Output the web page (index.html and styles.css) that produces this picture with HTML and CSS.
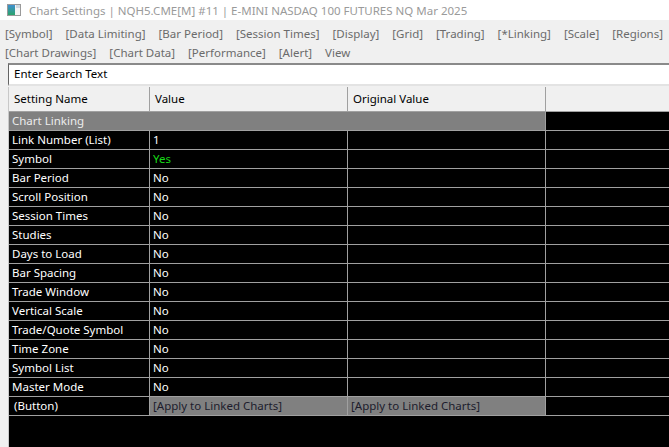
FILE: index.html
```html
<!DOCTYPE html>
<html>
<head>
<meta charset="utf-8">
<link rel="stylesheet" href="styles.css">
</head>
<body>
<div class="window">
  <div class="titlebar">
    <svg class="appicon" width="14" height="12" viewBox="0 0 14 12">
      <rect x="0.5" y="0.5" width="13" height="11" fill="#f4f4f4" stroke="#9a9a9a"/>
      <defs>
        <linearGradient id="g" x1="0" y1="0" x2="0" y2="1">
          <stop offset="0" stop-color="#3f8fd0"/>
          <stop offset="1" stop-color="#2aa36a"/>
        </linearGradient>
      </defs>
      <rect x="1" y="1" width="7" height="10" fill="url(#g)"/>
      <rect x="9" y="1" width="4" height="3" fill="#cfd8e0"/>
    </svg>
    <span class="title">Chart Settings | NQH5.CME[M] #11 | E-MINI NASDAQ 100 FUTURES NQ Mar 2025</span>
  </div>
  <div class="links">
    <span>[Symbol]</span><span>[Data Limiting]</span><span>[Bar Period]</span><span>[Session Times]</span><span>[Display]</span><span>[Grid]</span><span>[Trading]</span><span>[*Linking]</span><span>[Scale]</span><span>[Regions]</span>
    <span>[Chart Drawings]</span><span>[Chart Data]</span><span>[Performance]</span><span>[Alert]</span><span>View</span>
  </div>
  <div class="search">Enter Search Text</div>
  <div class="grid">
    <div class="hd">Setting Name</div><div class="hd">Value</div><div class="hd">Original Value</div><div class="hd last"></div>
    <div class="group">Chart Linking</div><div class="group"></div><div class="group"></div><div class="c last"></div>

    <div class="c">Link Number (List)</div><div class="c">1</div><div class="c"></div><div class="c last"></div>
    <div class="c">Symbol</div><div class="c yes">Yes</div><div class="c"></div><div class="c last"></div>
    <div class="c">Bar Period</div><div class="c">No</div><div class="c"></div><div class="c last"></div>
    <div class="c">Scroll Position</div><div class="c">No</div><div class="c"></div><div class="c last"></div>
    <div class="c">Session Times</div><div class="c">No</div><div class="c"></div><div class="c last"></div>
    <div class="c">Studies</div><div class="c">No</div><div class="c"></div><div class="c last"></div>
    <div class="c">Days to Load</div><div class="c">No</div><div class="c"></div><div class="c last"></div>
    <div class="c">Bar Spacing</div><div class="c">No</div><div class="c"></div><div class="c last"></div>
    <div class="c">Trade Window</div><div class="c">No</div><div class="c"></div><div class="c last"></div>
    <div class="c">Vertical Scale</div><div class="c">No</div><div class="c"></div><div class="c last"></div>
    <div class="c">Trade/Quote Symbol</div><div class="c">No</div><div class="c"></div><div class="c last"></div>
    <div class="c">Time Zone</div><div class="c">No</div><div class="c"></div><div class="c last"></div>
    <div class="c">Symbol List</div><div class="c">No</div><div class="c"></div><div class="c last"></div>
    <div class="c">Master Mode</div><div class="c">No</div><div class="c"></div><div class="c last"></div>
    <div class="c btnname">(Button)</div><div class="c btn">[Apply to Linked Charts]</div><div class="c btn">[Apply to Linked Charts]</div><div class="c last"></div>
  </div>
  <div class="filler"></div>
</div>
</body>
</html>
```
FILE: styles.css
```css
* { box-sizing: border-box; }
html, body { margin: 0; padding: 0; height: 100%; }
body {
  background: #f0f0f0;
  font-family: "Segoe UI", "Noto Sans", "Open Sans", sans-serif;
  font-size: 11.5px;
  overflow: hidden;
}
.window {
  display: flex;
  flex-direction: column;
  height: 447px;
  width: 669px;
}
.titlebar {
  height: 20px;
  display: flex;
  align-items: center;
  background: #ffffff;
  padding-left: 7px;
}
.appicon { margin-right: 8px; flex: none; }
.title {
  color: #9a9a9a;
  white-space: nowrap;
}
.links {
  display: flex;
  flex-wrap: wrap;
  column-gap: 13px;
  padding: 5px 0 0 5px;
  color: #6b6b6b;
  line-height: 18px;
  height: 43px;
}
.search {
  margin-left: 8px;
  height: 23px;
  background: #ffffff;
  border-top: 2px solid #8a8a8a;
  border-left: 1px solid #646464;
  border-bottom: 2px solid #e3e3e3;
  padding-left: 5px;
  line-height: 18px;
  color: #000;
}
.grid {
  margin-left: 8px;
  margin-top: 1px;
  display: grid;
  grid-template-columns: 141px 198px 198px 1fr;
  border-left: 1px solid #c8c8c8;
  background: #000;
}
.hd {
  height: 25px;
  line-height: 24px;
  background: #f0f0f0;
  color: #000;
  padding-left: 5px;
  border-right: 1px solid #a0a0a0;
  border-bottom: 1px solid #a0a0a0;
}
.hd.last { border-right: none; }
.group {
  height: 19px;
  line-height: 18px;
  background: #808080;
  color: #ececec;
  padding-left: 3px;
  border-bottom: 1px solid #a0a0a0;
}
.group:nth-child(7) { border-right: 1px solid #a0a0a0; }
.c {
  height: 19px;
  line-height: 18px;
  color: #ffffff;
  padding-left: 3px;
  border-right: 1px solid #a0a0a0;
  border-bottom: 1px solid #a0a0a0;
  white-space: nowrap;
  overflow: hidden;
}
.c.last { border-right: none; }
.c.yes { color: #17d917; }
.c.btnname { padding-left: 5px; }
.c.btn { background: #808080; color: #1c1c2c; }
.filler {
  flex: 1;
  margin-left: 8px;
  background: #000;
  border-left: 1px solid #c8c8c8;
}
```
